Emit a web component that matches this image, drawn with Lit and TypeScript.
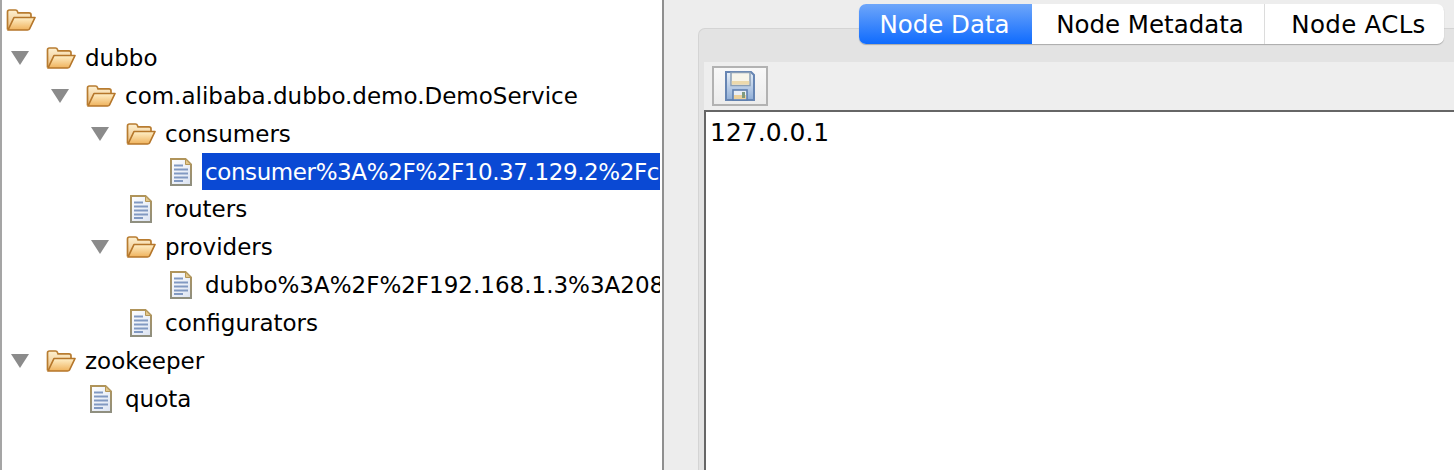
import { LitElement, html, css, svg } from 'lit'
import { customElement } from 'lit/decorators.js'

type TreeRow = {
  level: number
  kind: 'folder' | 'doc'
  label: string
  open?: boolean
  selected?: boolean
}

const rows: TreeRow[] = [
  { level: 0, kind: 'folder', label: '' },
  { level: 1, kind: 'folder', label: 'dubbo', open: true },
  { level: 2, kind: 'folder', label: 'com.alibaba.dubbo.demo.DemoService', open: true },
  { level: 3, kind: 'folder', label: 'consumers', open: true },
  { level: 4, kind: 'doc', label: 'consumer%3A%2F%2F10.37.129.2%2Fc', selected: true },
  { level: 3, kind: 'doc', label: 'routers' },
  { level: 3, kind: 'folder', label: 'providers', open: true },
  { level: 4, kind: 'doc', label: 'dubbo%3A%2F%2F192.168.1.3%3A208' },
  { level: 3, kind: 'doc', label: 'configurators' },
  { level: 1, kind: 'folder', label: 'zookeeper', open: true },
  { level: 2, kind: 'doc', label: 'quota' },
]

const defs = svg`
  <defs>
    <linearGradient id="fb" x1="0" y1="0" x2="0" y2="1">
      <stop offset="0" stop-color="#fdf0d0"/><stop offset="1" stop-color="#edbf7f"/>
    </linearGradient>
    <linearGradient id="ff" x1="0" y1="0" x2="0" y2="1">
      <stop offset="0" stop-color="#fff0c9"/><stop offset="1" stop-color="#efb25c"/>
    </linearGradient>
    <linearGradient id="dp" x1="0" y1="0" x2="1" y2="1">
      <stop offset="0" stop-color="#ffffff"/><stop offset="1" stop-color="#dbe3f2"/>
    </linearGradient>
    <linearGradient id="ds" x1="0" y1="0" x2="0" y2="1">
      <stop offset="0" stop-color="#b0945a"/><stop offset="1" stop-color="#8f8f80"/>
    </linearGradient>
    <linearGradient id="fl" x1="0" y1="0" x2="0" y2="1">
      <stop offset="0" stop-color="#e8f0f8"/><stop offset="1" stop-color="#8fadd6"/>
    </linearGradient>
  </defs>
`

const folderIcon = html`<svg class="folder" width="30" height="22" viewBox="0 0 30 22">
  ${defs}
  <path d="M1.5 20.5V3Q1.5 1 3.5 1H9.5Q11 1 11.5 2.5L12 3.8H23Q25 3.8 25 5.8V9" fill="url(#fb)" stroke="#b87c30" stroke-width="1.7"/>
  <path d="M8 8.5H29L23.5 20Q23 21 21.5 21H2Z" fill="url(#ff)" stroke="#b5762a" stroke-width="1.7" stroke-linejoin="round"/>
</svg>`

const docIcon = html`<svg class="doc" width="22" height="28" viewBox="0 0 22 28">
  ${defs}
  <path d="M1 1H15.5L21 6.5V27H1Z" fill="url(#dp)" stroke="url(#ds)" stroke-width="2"/>
  <path d="M15.5 1V6.5H21Z" fill="#e3c78c" stroke="#b49656"/>
  <path d="M4 7.5H13M4 11.5H18M4 15.5H18M4 19.5H18M4 23H13" stroke="#8199c2" stroke-width="2"/>
</svg>`

const saveIcon = html`<svg width="30" height="30" viewBox="0 0 30 30">
  ${defs}
  <path d="M1 1H26L29 4V29H1Z" fill="url(#fl)" stroke="#6685b3" stroke-width="2"/>
  <rect x="6" y="1.5" width="19" height="13" fill="#f7f5ea" stroke="#8a9fb5" stroke-width="1.5"/>
  <rect x="6.8" y="10" width="17.4" height="3.6" fill="#ecd9ac"/>
  <rect x="8" y="19" width="14" height="10" fill="#e9eef6" stroke="#5f7fae" stroke-width="1.6"/>
  <rect x="9" y="24" width="12" height="4" fill="#ecd09a"/>
  <rect x="17" y="21" width="3" height="6" fill="#7f9a7f"/>
</svg>`

@customElement('app-root')
export class AppRoot extends LitElement {
  static styles = css`
    :host {
      display: flex;
      width: 1454px;
      height: 470px;
      overflow: hidden;
      font-family: 'DejaVu Sans', sans-serif;
      font-size: 23px;
      color: #000;
      background: #ededed;
    }

    .tree {
      box-sizing: border-box;
      width: 664px;
      flex: none;
      padding: 1px 2px 0 0;
      background: #fff;
      border-left: 2px solid #a5a5a5;
      border-right: 2px solid #8f8f8f;
      overflow: hidden;
    }
    .row {
      display: flex;
      align-items: center;
      height: 37.9px;
      white-space: nowrap;
    }
    .arrow {
      flex: none;
      width: 0;
      height: 0;
      margin-left: 9px;
      border-left: 9px solid transparent;
      border-right: 9px solid transparent;
      border-top: 14px solid #8b8b8b;
    }
    .arrow-gap {
      flex: none;
      width: 35px;
    }
    .folder {
      flex: none;
      margin-left: 17px;
    }
    .root .folder {
      margin-left: 4px;
    }
    .doc {
      flex: none;
      margin-left: 48px;
    }
    .label {
      margin-left: 9px;
    }
    .doc + .label {
      margin-left: 10px;
      flex: 1;
      min-width: 0;
      overflow: hidden;
      height: 37.9px;
      line-height: 39.5px;
      padding-left: 3px;
    }
    .selected {
      background: #0a49d4;
      color: #fff;
      letter-spacing: -0.4px;
    }

    .side {
      flex: 1;
      min-width: 0;
      display: flex;
      flex-direction: column;
    }
    .tabs {
      position: relative;
      z-index: 1;
      align-self: flex-end;
      display: flex;
      height: 40px;
      margin: 4px 10px 0 0;
      font-size: 24.5px;
      background: #fff;
      border-radius: 7px;
      box-shadow: 0 1px 1px #a9a9a9;
    }
    .tab {
      box-sizing: border-box;
      display: flex;
      align-items: center;
      justify-content: center;
    }
    .tab.data {
      width: 173px;
      padding-right: 2px;
      color: #fff;
      background: linear-gradient(#6ea6fa, #0f6bfe);
      border-radius: 7px 0 0 7px;
    }
    .tab.meta {
      width: 233px;
      padding-left: 4px;
      border-right: 1px solid #dcdcdc;
    }
    .tab.acls {
      width: 179px;
      padding-left: 8px;
      letter-spacing: 0.3px;
    }
    .panel {
      flex: 1;
      min-height: 0;
      display: flex;
      flex-direction: column;
      margin: -16px 0 0 34px;
      padding: 33px 0 0 5px;
      background: #e3e3e3;
      border: solid #d4d4d4;
      border-width: 1px 0 0 1px;
      border-top-left-radius: 7px;
    }
    .toolbar {
      flex: none;
      height: 48px;
      box-sizing: border-box;
      padding: 4px 0 0 8px;
      background: #eeeeee;
    }
    .save {
      box-sizing: border-box;
      width: 56px;
      height: 40px;
      display: flex;
      align-items: center;
      justify-content: center;
      background: linear-gradient(#f8f8f8, #ececec);
      border: 2px solid #b2b2b2;
    }
    .editor {
      flex: 1;
      padding: 6px 0 0 4px;
      font-size: 25px;
      background: #fff;
      border: solid #666;
      border-width: 2px 0 0 2px;
    }
  `

  renderRow(row: TreeRow) {
    const indent = row.level > 0 ? (row.level - 1) * 40 : 0
    return html`
      <div class="row ${row.level === 0 ? 'root' : ''}" style="padding-left:${indent}px">
        ${row.open ? html`<span class="arrow"></span>` : row.level > 0 && row.kind === 'folder' ? html`<span class="arrow-gap"></span>` : ''}
        ${row.kind === 'folder' ? folderIcon : docIcon}
        ${row.label ? html`<span class="label ${row.selected ? 'selected' : ''}">${row.label}</span>` : ''}
      </div>
    `
  }

  render() {
    return html`
      <div class="tree">${rows.map((r) => this.renderRow(r))}</div>
      <div class="side">
        <div class="tabs">
          <div class="tab data">Node Data</div>
          <div class="tab meta">Node Metadata</div>
          <div class="tab acls">Node ACLs</div>
        </div>
        <div class="panel">
          <div class="toolbar"><div class="save">${saveIcon}</div></div>
          <div class="editor">127.0.0.1</div>
        </div>
      </div>
    `
  }
}
